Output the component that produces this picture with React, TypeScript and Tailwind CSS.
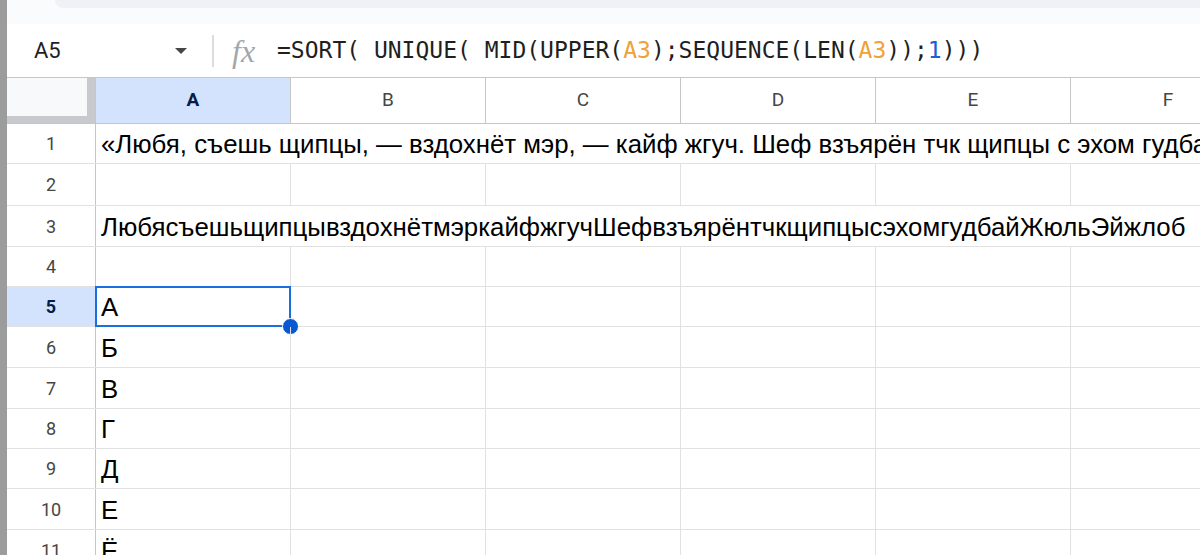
import React from "react";

const columns = ["A", "B", "C", "D", "E", "F"];

const row1 =
  "«Любя, съешь щипцы, — вздохнёт мэр, — кайф жгуч. Шеф взъярён тчк щипцы с эхом гудбай Жюль. Эйжлоб»";
const row3 =
  "ЛюбясъешьщипцывздохнётмэркайфжгучШефвзъярёнтчкщипцысэхомгудбайЖюльЭйжлоб";

const rows: { n: number; h: string; text?: string; wide?: boolean }[] = [
  { n: 1, h: "h-[40px]", text: row1, wide: true },
  { n: 2, h: "h-[42px]" },
  { n: 3, h: "h-[41px]", text: row3, wide: true },
  { n: 4, h: "h-[40px]" },
  { n: 5, h: "h-[40px]", text: "А" },
  { n: 6, h: "h-[41px]", text: "Б" },
  { n: 7, h: "h-[41px]", text: "В" },
  { n: 8, h: "h-[40px]", text: "Г" },
  { n: 9, h: "h-[40px]", text: "Д" },
  { n: 10, h: "h-[41px]", text: "Е" },
  { n: 11, h: "h-[41px]", text: "Ё" },
];

const sans = "font-['Roboto','Liberation_Sans',Arial,sans-serif]";
const cellFont = "font-['Liberation_Sans',Arial,sans-serif]";

function FormulaBar() {
  return (
    <div className="flex h-[54px] shrink-0 items-center border-b border-[#c4c7c5] bg-white">
      <div className={`w-[140px] pl-[27px] text-[22px] text-[#1f1f1f] ${sans}`}>A5</div>
      <svg width="14" height="8" viewBox="0 0 14 8" className="ml-[27px]">
        <path d="M1 1h12L7 7z" fill="#444746" />
      </svg>
      <div className="ml-[24px] h-[32px] w-[2px] bg-[#dadce0]" />
      <span className="ml-[18px] w-[30px] font-['Liberation_Serif',serif] text-[32px] italic leading-none text-[#a3a7ab]">
        fx
      </span>
      <div className="ml-[15px] whitespace-nowrap font-['DejaVu_Sans_Mono',monospace] text-[23px] text-[#1f1f1f]">
        =SORT( UNIQUE( MID(UPPER(<span className="text-[#f0a138]">A3</span>);SEQUENCE(LEN(
        <span className="text-[#f0a138]">A3</span>));<span className="text-[#1c5fd0]">1</span>)))
      </div>
    </div>
  );
}

function HeaderRow() {
  return (
    <div className="flex h-[46px] shrink-0 border-b border-[#c4c7c5]">
      <div className="flex w-[89px] shrink-0 flex-col border-r border-[#c4c7c5] bg-[#f8f9fa]">
        <div className="flex flex-1">
          <div className="flex-1" />
          <div className="w-[8px] bg-[#c7c9cc]" />
        </div>
        <div className="h-[7px] bg-[#c7c9cc]" />
      </div>
      {columns.map((c) => (
        <div
          key={c}
          className={`flex w-[195px] shrink-0 items-center justify-center border-r border-[#c4c7c5] text-[19px] ${sans} ${
            c === "A" ? "bg-[#d3e3fd] font-bold text-[#041e49]" : "bg-white text-[#444746]"
          }`}
        >
          {c}
        </div>
      ))}
    </div>
  );
}

export default function App() {
  return (
    <div className="flex h-[555px] w-[1200px] overflow-hidden bg-white">
      <div className="w-[7px] shrink-0 bg-[#9c9c9c]" />
      <div className="flex min-w-0 flex-1 flex-col">
        <div className="h-[24px] shrink-0 bg-[#f9fbfd]">
          <div className="ml-[48px] h-[8px] rounded-bl-[20px] bg-[#eff1f6]" />
        </div>
        <FormulaBar />
        <HeaderRow />
        {rows.map((r) => {
          const selected = r.n === 5;
          return (
            <div key={r.n} className={`flex shrink-0 border-b border-[#e1e1e1] ${r.h}`}>
              <div
                className={`flex w-[89px] shrink-0 items-center justify-center border-r border-[#c4c7c5] text-[18px] ${sans} ${
                  selected ? "bg-[#d3e3fd] font-bold text-[#041e49]" : "text-[#444746]"
                }`}
              >
                {r.n}
              </div>
              {r.wide ? (
                <div className={`flex flex-1 items-center whitespace-nowrap pl-[5px] pt-[2px] text-[25.8px] text-black ${cellFont}`}>
                  {r.text}
                </div>
              ) : (
                columns.map((c, i) => (
                  <div
                    key={c}
                    className={`relative flex w-[195px] shrink-0 items-center border-r border-[#e1e1e1] pl-[5px] pt-[2px] text-[25.8px] text-black ${cellFont}`}
                  >
                    {i === 0 ? r.text : null}
                    {i === 0 && selected ? (
                      <>
                        <div className="absolute -bottom-[1px] -left-[1px] -right-[1px] -top-[1px] border-2 border-[#1a6fe0]" />
                        <div className="absolute -bottom-[9px] -right-[9px] h-[17px] w-[17px] rounded-full border-[1.5px] border-white bg-[#0b57d0]" />
                      </>
                    ) : null}
                  </div>
                ))
              )}
            </div>
          );
        })}
      </div>
    </div>
  );
}
